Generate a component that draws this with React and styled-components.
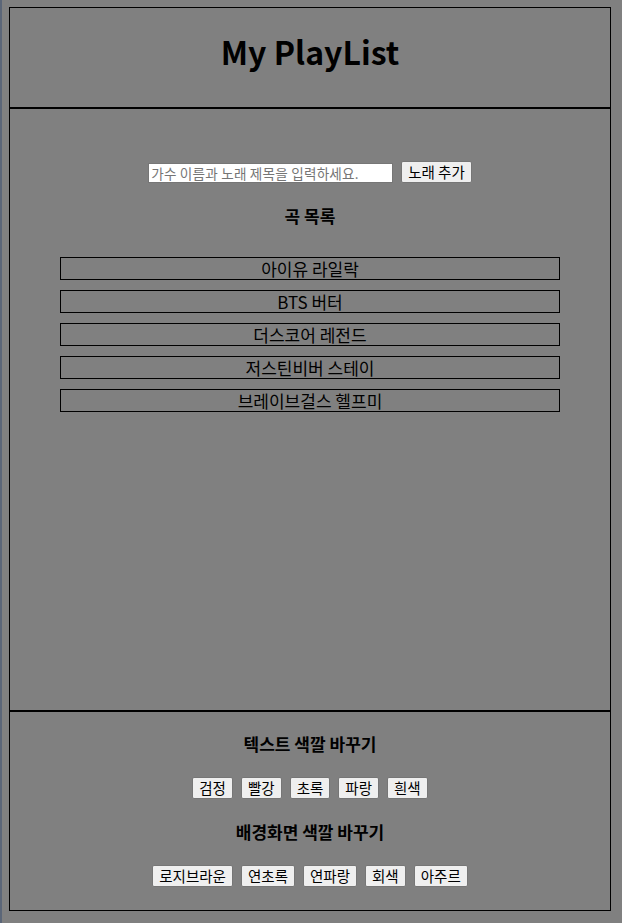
import React, { useState } from 'react';
import styled, { createGlobalStyle } from 'styled-components';

const GlobalStyle = createGlobalStyle`
  html {
    background: #808080;
  }
  body {
    margin: 7px 0 0 9px;
    background: #808080;
    font-family: "Noto Sans CJK KR", "Noto Sans", sans-serif;
    color: #000;
  }
  body::before {
    content: '';
    position: fixed;
    left: 0;
    top: 0;
    bottom: 0;
    width: 2px;
    background: #5b6678;
  }
`;

const Frame = styled.div`
  width: 600px;
  border: 1px solid #000;
  display: flex;
  flex-direction: column;
`;

const Header = styled.header`
  height: 99px;
  display: flex;
  align-items: center;
  justify-content: center;
  border-bottom: 2px solid #000;
`;

const Title = styled.h1`
  margin: 0 0 14px;
  font-size: 32px;
  font-weight: 700;
  line-height: 40px;
`;

const Main = styled.main`
  height: 601px;
  padding-top: 52px;
  box-sizing: border-box;
  display: flex;
  flex-direction: column;
  align-items: center;
`;

const AddRow = styled.form`
  display: flex;
  align-items: flex-end;
  gap: 8px;
  margin: 0;
`;

const TextInput = styled.input`
  width: 245px;
  height: 20px;
  box-sizing: border-box;
  border: 1px solid #767676;
  padding: 0 2px;
  font-family: inherit;
  font-size: 13.6px;
  letter-spacing: 0.2px;
  background: #fff;
  outline: none;

  &::placeholder {
    color: #757575;
  }
`;

const Button = styled.button`
  height: 22px;
  box-sizing: border-box;
  padding: 0 6px;
  border: 1px solid #767676;
  border-radius: 2px;
  background: #efefef;
  color: #000;
  font-family: inherit;
  font-size: 14.5px;
  line-height: 18px;
  cursor: pointer;
`;

const SectionTitle = styled.h3`
  margin: ${(props) => props.$gap || '21px 0 0'};
  font-size: 17px;
  font-weight: 700;
  line-height: 24px;
  text-align: center;
`;

const SongList = styled.ul`
  list-style: none;
  margin: 29px 0 0;
  padding: 0;
  display: flex;
  flex-direction: column;
  gap: 10px;
`;

const Song = styled.li`
  width: 498px;
  height: 21px;
  border: 1px solid #000;
  font-size: 17px;
  line-height: 21px;
  text-align: center;
  color: ${(props) => props.$color};
`;

const Footer = styled.footer`
  height: 200px;
  padding-top: 20px;
  box-sizing: border-box;
  border-top: 2px solid #000;
  display: flex;
  flex-direction: column;
  align-items: center;
`;

const ButtonRow = styled.div`
  display: flex;
  gap: 8px;
  margin-top: 21px;
`;

const songs = [
  '아이유 라일락',
  'BTS 버터',
  '더스코어 레전드',
  '저스틴비버 스테이',
  '브레이브걸스 헬프미',
];

const textColors = [
  { label: '검정', value: '#000' },
  { label: '빨강', value: 'red' },
  { label: '초록', value: 'green' },
  { label: '파랑', value: 'blue' },
  { label: '흰색', value: '#fff' },
];

const bgColors = [
  { label: '로지브라운', value: 'rosybrown' },
  { label: '연초록', value: 'lightgreen' },
  { label: '연파랑', value: 'lightblue' },
  { label: '회색', value: 'gray' },
  { label: '아주르', value: 'azure' },
];

const App = () => {
  const [list, setList] = useState(songs);
  const [input, setInput] = useState('');
  const [textColor, setTextColor] = useState('#000');

  const onSubmit = (e) => {
    e.preventDefault();
    if (!input.trim()) return;
    setList([...list, input]);
    setInput('');
  };

  return (
    <>
      <GlobalStyle />
      <Frame>
        <Header>
          <Title>My PlayList</Title>
        </Header>
        <Main>
          <AddRow onSubmit={onSubmit}>
            <TextInput
              value={input}
              onChange={(e) => setInput(e.target.value)}
              placeholder="가수 이름과 노래 제목을 입력하세요."
            />
            <Button type="submit">노래 추가</Button>
          </AddRow>
          <SectionTitle>곡 목록</SectionTitle>
          <SongList>
            {list.map((song) => (
              <Song key={song} $color={textColor}>
                {song}
              </Song>
            ))}
          </SongList>
        </Main>
        <Footer>
          <SectionTitle $gap="0">텍스트 색깔 바꾸기</SectionTitle>
          <ButtonRow>
            {textColors.map((c) => (
              <Button key={c.label} onClick={() => setTextColor(c.value)}>
                {c.label}
              </Button>
            ))}
          </ButtonRow>
          <SectionTitle>배경화면 색깔 바꾸기</SectionTitle>
          <ButtonRow>
            {bgColors.map((c) => (
              <Button
                key={c.label}
                onClick={() => (document.body.style.background = c.value)}
              >
                {c.label}
              </Button>
            ))}
          </ButtonRow>
        </Footer>
      </Frame>
    </>
  );
};

export default App;
